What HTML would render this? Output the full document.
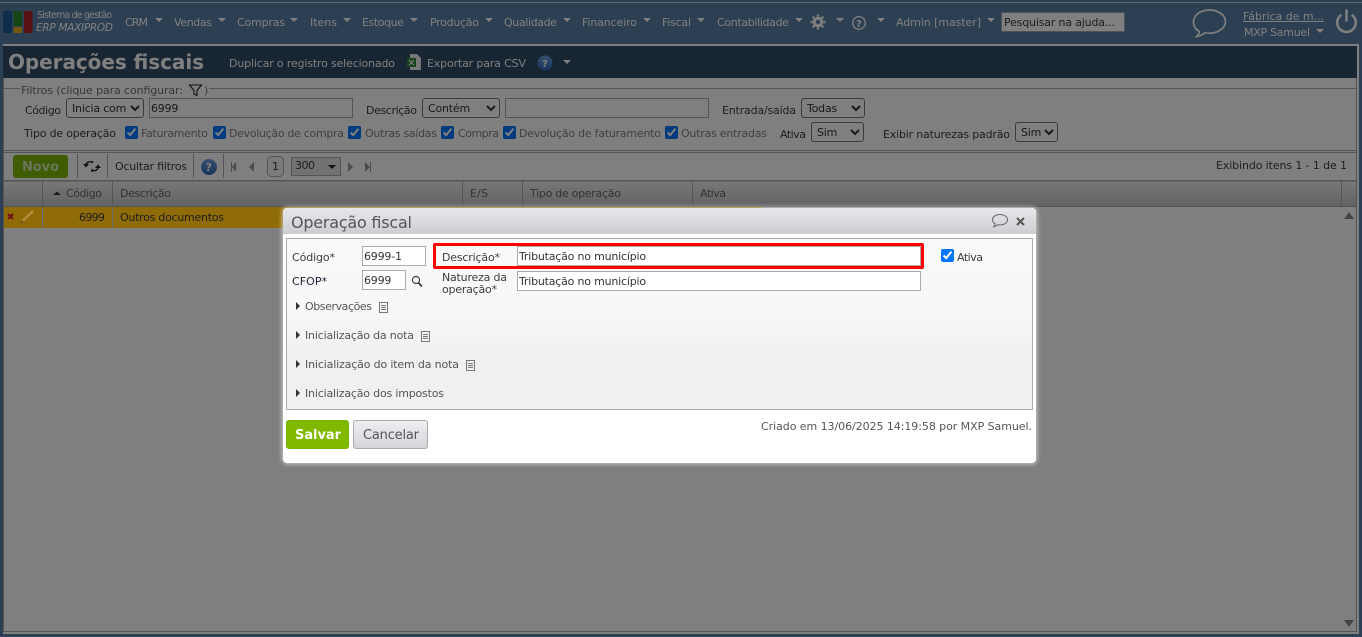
<!DOCTYPE html>
<html lang="pt-BR"><head><meta charset="utf-8"><title>Operações fiscais</title>
<style>
html,body{margin:0;padding:0;width:1362px;height:637px;overflow:hidden;background:#fff}
body{position:relative;font-family:"DejaVu Sans",sans-serif;font-size:11px;color:#333}
.layer{position:absolute;left:0;top:0;width:1362px;height:637px}
svg.layer text{font-family:"DejaVu Sans",sans-serif;font-size:11px;fill:#444}
svg.layer text.nav{fill:#fff}
svg.layer text.dk{fill:#3c3c3c}
#overlay{background:rgba(0,0,0,.5)}
input[type=text],select{position:absolute;box-sizing:border-box;margin:0;font-family:"DejaVu Sans",sans-serif;font-size:11px;letter-spacing:-.2px;color:#333;background:#fff;outline:none}
input[type=text]{border:1px solid #aaa;padding:0 1px;border-radius:0}
select{border:1px solid #767676;border-radius:3px;padding:0 0 0 1px}
input[type=checkbox]{position:absolute;margin:0;width:13px;height:13px;accent-color:#0075ff}
#modal{position:absolute;left:283px;top:208px;width:753px;height:255px;background:#fff;border-radius:4px;box-shadow:0 0 5px 1px rgba(255,255,255,.6)}
#mtitle{position:absolute;left:0;top:0;width:753px;height:26px;border-radius:4px 4px 0 0;background:linear-gradient(#e7e8ea,#cccdd1)}
#mpanel{position:absolute;left:3px;top:30px;width:747px;height:172px;box-sizing:border-box;border:1px solid #a9abad;background:linear-gradient(#f8f9f9 0,#f7f8f8 40%,#eff0f2 70%,#eff0f2 100%)}
.btn{position:absolute;top:212px;height:29px;box-sizing:border-box;border-radius:3px}
#salvar{left:3px;width:63px;background:#7fba00;border:1px solid #79b000}
#cancelar{left:70px;width:75px;background:linear-gradient(#eceef0,#d3d5d9);border:1px solid #a9abb0}
#red{position:absolute;left:433px;top:243px;width:491px;height:26px;box-sizing:border-box;border:3px solid #f00;border-radius:2px}
</style></head><body>

<!-- PAGE BEHIND THE MODAL -->
<svg class="layer" viewBox="0 0 1362 637">
<defs>
<linearGradient id="gh" x1="0" y1="0" x2="0" y2="1"><stop offset="0" stop-color="#f0f0f0"/><stop offset="1" stop-color="#c4c6c8"/></linearGradient>
<linearGradient id="hb" x1="0" y1="0" x2="0" y2="1"><stop offset="0" stop-color="#6da0e0"/><stop offset="1" stop-color="#2f66b8"/></linearGradient>
</defs>
<rect width="1362" height="637" fill="#5a7ea4"/>
<rect y="2" width="1362" height="1" fill="#c0d0d8"/>
<rect x="3" y="44" width="1356" height="590" fill="#fff"/>
<rect x="3" y="46" width="1354" height="32" fill="#304a66"/>
<!-- logo -->
<rect x="3" y="11" width="9" height="22" rx="1.5" fill="#1e5a9a"/>
<rect x="13.500" y="11" width="8.500" height="15" rx="1" fill="#2f8a30"/>
<rect x="13.500" y="27" width="8.500" height="6" rx="1" fill="#e8b020"/>
<rect x="24" y="11" width="8.500" height="22" rx="1.500" fill="#b02020"/>
<text class="nav" x="37" y="18" textLength="75" style="font-size:9.500px">Sistema de gestão</text>
<text class="nav" x="36" y="31" textLength="77" style="font-size:10.500px;font-style:italic">ERP MAXIPROD</text>
<!-- nav -->
<text class="nav" x="125" y="26" textLength="23">CRM</text>
<text class="nav" x="174" y="26" textLength="38">Vendas</text>
<text class="nav" x="237" y="26" textLength="48">Compras</text>
<text class="nav" x="310" y="26" textLength="27">Itens</text>
<text class="nav" x="362" y="26" textLength="42">Estoque</text>
<text class="nav" x="430" y="26" textLength="49">Produção</text>
<text class="nav" x="504" y="26" textLength="53">Qualidade</text>
<text class="nav" x="582" y="26" textLength="55">Financeiro</text>
<text class="nav" x="662" y="26" textLength="29">Fiscal</text>
<text class="nav" x="717" y="26" textLength="72">Contabilidade</text>
<text class="nav" x="896" y="26" textLength="85">Admin [master]</text>
<g fill="#fff">
<path d="M155 18h8l-4 4z"/><path d="M218 18h8l-4 4z"/><path d="M290 18h8l-4 4z"/><path d="M343 18h8l-4 4z"/><path d="M410 18h8l-4 4z"/><path d="M485 18h8l-4 4z"/><path d="M563 18h8l-4 4z"/><path d="M643 18h8l-4 4z"/><path d="M697 18h8l-4 4z"/><path d="M795 18h8l-4 4z"/><path d="M836 18h8l-4 4z"/><path d="M877 18h8l-4 4z"/><path d="M987 18h8l-4 4z"/><path d="M1316 29h8l-4 4z"/><path d="M563 60h8l-4 4z"/>
</g>
<!-- gear -->
<g transform="translate(818 22)" fill="none" stroke="#fff"><circle r="3.800" stroke-width="3"/><path stroke-width="2.400" d="M0-7.500v2M0 7.500v-2M-7.500 0h2M7.500 0h-2M-5.300-5.300l1.400 1.400M5.300 5.300l-1.400-1.400M-5.300 5.300l1.400-1.400M5.300-5.300l-1.400 1.400"/></g>
<!-- help header -->
<circle cx="859" cy="23" r="6.300" fill="none" stroke="#fff" stroke-width="1.300"/>
<text class="nav" x="856" y="27" style="font-size:10px;font-weight:bold">?</text>
<!-- search -->
<rect x="1001.500" y="12.500" width="123" height="19" fill="#fff" stroke="#9aa6b0"/>
<text class="dk" x="1004" y="26" textLength="111">Pesquisar na ajuda...</text>
<!-- chat bubble -->
<path d="M1209.500 10c-9 0-16 5-16 12 0 4 2 7.500 6 9.500-.3 2-1.300 3.500-2.800 5 3-.3 6-1.800 8-3.700 1.600.3 3.200.4 4.800.4 9 0 16-5.500 16-11.700S1218.500 10 1209.500 10z" fill="none" stroke="#fff" stroke-width="1.700"/>
<text class="nav" x="1243" y="20" textLength="81">Fábrica de m...</text>
<rect x="1243" y="21" width="81" height="1" fill="#fff"/>
<text class="nav" x="1244" y="36" textLength="66">MXP Samuel</text>
<!-- power -->
<path d="M1340.500 15.500a9.300 9.300 0 1 0 12 0" fill="none" stroke="#fff" stroke-width="2.500" stroke-linecap="round"/>
<path d="M1346.500 10.500v10" fill="none" stroke="#fff" stroke-width="2.500" stroke-linecap="round"/>
<!-- title bar -->
<text x="8" y="69" textLength="196" style="fill:#fff;font-size:20px;font-weight:bold">Operações fiscais</text>
<text class="nav" x="229" y="67" textLength="166">Duplicar o registro selecionado</text>
<path d="M410 54h7l4 4v12h-11z" fill="#eee"/><rect x="407" y="58" width="9" height="9" fill="#2e8a40"/><path d="M409 60l5 5M414 60l-5 5" stroke="#fff" stroke-width="1"/>
<text class="nav" x="427" y="67" textLength="99">Exportar para CSV</text>
<circle cx="545" cy="63" r="7.500" fill="url(#hb)"/><text x="542" y="67" style="fill:#fff;font-size:10px;font-weight:bold">?</text>
<!-- filter fieldset -->
<path d="M20 88.500H3.500V150.500H1356.500V88.500H209" fill="none" stroke="#aaa"/>
<text x="21" y="94" textLength="162" style="fill:#707070">Filtros (clique para configurar:</text>
<path d="M189.500 85h12l-4.500 5.500v5l-3 -1.500v-3.500z" fill="none" stroke="#222" stroke-width="1.100"/>
<text x="204" y="94" style="fill:#707070">)</text>
<text class="dk" x="25" y="114" textLength="36">Código</text>
<text class="dk" x="366" y="114" textLength="51">Descrição</text>
<text class="dk" x="722" y="114" textLength="74">Entrada/saída</text>
<text class="dk" x="24" y="137" textLength="92">Tipo de operação</text>
<text x="141" y="137" textLength="67" style="fill:#808080">Faturamento</text>
<text x="229" y="137" textLength="115" style="fill:#808080">Devolução de compra</text>
<text x="365" y="137" textLength="72" style="fill:#808080">Outras saídas</text>
<text x="458" y="137" textLength="41" style="fill:#808080">Compra</text>
<text x="519" y="137" textLength="142" style="fill:#808080">Devolução de faturamento</text>
<text x="681" y="137" textLength="86" style="fill:#808080">Outras entradas</text>
<text class="dk" x="780" y="138" textLength="26">Ativa</text>
<text class="dk" x="883" y="138" textLength="127">Exibir naturezas padrão</text>
<!-- toolbar -->
<rect x="3.500" y="152.500" width="1353" height="28" fill="none" stroke="#aaa"/>
<rect x="13" y="155" width="55" height="23" rx="3" fill="#7fba00"/>
<text x="22" y="171" textLength="37" style="fill:#d8e8b8;font-size:13px;font-weight:bold">Novo</text>
<path d="M77.500 154v24M107.500 154v24M193.500 154v24M223.500 154v24" stroke="#aaa"/>
<g fill="none" stroke="#222" stroke-width="1.400"><path d="M92 162.500c-2.500-1.500-5.500-.5-6 2.500"/><path d="M92 170c2.500 1.500 5.500.5 6-2.500"/><path d="M92.500 161v2M92 169v3"/></g>
<path d="M83 164h6l-3 3.500zM95 168h6l-3-3.500z" fill="#222"/>
<text class="dk" x="115" y="170" textLength="72">Ocultar filtros</text>
<circle cx="209" cy="167" r="8" fill="url(#hb)"/><text x="205.500" y="171" style="fill:#fff;font-size:11px;font-weight:bold">?</text>
<g fill="#999"><path d="M231 162h1v10h-1zM236 162v10l-4-5z"/><path d="M254 162v10l-5-5z"/><path d="M348 162v10l5-5z"/><path d="M365 162v10l5-5zM370 162h1v10h-1z"/></g>
<rect x="267.500" y="156.500" width="16" height="20" rx="4" fill="#f4f4f4" stroke="#aaa"/>
<text class="dk" x="272" y="170">1</text>
<rect x="291.500" y="157.500" width="49" height="18" fill="#e4e4e4" stroke="#aaa"/>
<text class="dk" x="295" y="169" textLength="20">300</text>
<path d="M328 165h8l-4 4z" fill="#222"/>
<text x="1216" y="169" textLength="131" class="dk">Exibindo itens 1 - 1 de 1</text>
<!-- grid header -->
<rect x="4" y="181" width="1352" height="25" fill="url(#gh)"/>
<rect x="3" y="180.500" width="1353" height="1" fill="#aaa"/>
<rect x="3" y="206" width="1353" height="1" fill="#aaa"/>
<path d="M42.500 181v25M112.500 181v25M462.500 181v25M522.500 181v25M692.500 181v25M1341.500 181v25" stroke="#aaa"/>
<path d="M53 195l4-3.500 4 3.500z" fill="#333"/>
<text x="66" y="197" textLength="36" style="fill:#666">Código</text>
<text x="120" y="197" textLength="51" style="fill:#666">Descrição</text>
<text x="470" y="197" textLength="18" style="fill:#666">E/S</text>
<text x="530" y="197" textLength="91" style="fill:#666">Tipo de operação</text>
<text x="700" y="197" textLength="26" style="fill:#666">Ativa</text>
<!-- scroll arrows + frame -->
<path d="M1344 219h10l-5-7z" fill="#888"/><path d="M1344 620h10l-5 7z" fill="#888"/>
<rect x="3.500" y="631" width="1353" height="1" fill="#aaa"/>
<rect x="1356" y="78" width="1" height="554" fill="#aaa"/>
<rect x="3" y="78" width="1" height="554" fill="#aaa"/>
</svg>

<input type="text" value="6999" style="left:149px;top:98px;width:204px;height:20px">
<input type="text" value="" style="left:505px;top:98px;width:204px;height:20px">
<select style="left:66px;top:98px;width:78px;height:20px"><option>Inicia com</option></select>
<select style="left:422px;top:98px;width:78px;height:20px"><option>Contém</option></select>
<select style="left:801px;top:98px;width:64px;height:20px"><option>Todas</option></select>
<select style="left:811px;top:122px;width:53px;height:20px"><option>Sim</option></select>
<select style="left:1015px;top:122px;width:43px;height:20px"><option>Sim</option></select>
<input type="checkbox" checked style="left:125px;top:126px">
<input type="checkbox" checked style="left:213px;top:126px">
<input type="checkbox" checked style="left:348px;top:126px">
<input type="checkbox" checked style="left:441px;top:126px">
<input type="checkbox" checked style="left:503px;top:126px">
<input type="checkbox" checked style="left:665px;top:126px">

<div id="overlay" class="layer"></div>

<!-- selected row, kept saturated over the dim layer -->
<svg class="layer" viewBox="0 0 1362 637">
<rect x="4" y="207" width="758" height="21" fill="#8f6c08"/>
<path d="M42.500 207v21M112.500 207v21" stroke="#6b6b6b"/>
<path d="M8 214l5 5M13 214l-5 5" stroke="#6e1010" stroke-width="2"/>
<path d="M22 221.500l11-10.500" stroke="#b88a3a" stroke-width="2.400"/>
<path d="M21 223l2-2" stroke="#5a4a2a" stroke-width="1.500"/>
<text x="79" y="221" textLength="26" style="fill:#1e1e1e">6999</text>
<text x="120" y="221" textLength="104" style="fill:#1e1e1e">Outros documentos</text>
</svg>

<!-- MODAL -->
<div id="modal"><div id="mtitle"></div><div id="mpanel"></div><div class="btn" id="salvar"></div><div class="btn" id="cancelar"></div></div>
<input type="text" value="6999-1" style="left:362px;top:246px;width:64px;height:20px">
<input type="text" value="6999" style="left:362px;top:270px;width:44px;height:20px">
<input type="text" value="Tributação no município" style="left:517px;top:246px;width:404px;height:20px">
<input type="text" value="Tributação no município" style="left:517px;top:271px;width:404px;height:20px">
<input type="checkbox" checked style="left:941px;top:249px">
<div id="red"></div>
<svg class="layer" viewBox="0 0 1362 637" style="pointer-events:none">
<text x="291" y="228" textLength="121" style="fill:#555;font-size:16px">Operação fiscal</text>
<path d="M1000 214.500c-4.500 0-7.500 2.400-7.500 5.300 0 1.800 1 3.200 2.800 4.100-.2 1-.7 2-1.500 2.800 1.700-.2 3.100-1 4.100-2 .7.100 1.400.200 2.100.200 4.500 0 7.500-2.300 7.500-5.100s-3-5.300-7.500-5.300z" fill="none" stroke="#666" stroke-width="1"/>
<path d="M1017 218l7 7M1024 218l-7 7" stroke="#555" stroke-width="2"/>
<text class="dk" x="292" y="261" textLength="43">Código*</text>
<text x="292" y="285" textLength="35" style="fill:#223">CFOP*</text>
<circle cx="416" cy="280" r="3.600" fill="none" stroke="#333" stroke-width="1.100"/><path d="M418.500 283l3.500 3.500" stroke="#333" stroke-width="1.600"/>
<text class="dk" x="442" y="261" textLength="58">Descrição*</text>
<text class="dk" x="442" y="281" textLength="65">Natureza da</text>
<text class="dk" x="442" y="293" textLength="55">operação*</text>
<text class="dk" x="957" y="261" textLength="26">Ativa</text>
<g fill="#333"><path d="M296 302v8l4-4z"/><path d="M296 331v8l4-4z"/><path d="M296 360v8l4-4z"/><path d="M296 389v8l4-4z"/></g>
<text x="305" y="310" textLength="67" style="fill:#555">Observações</text>
<text x="305" y="339" textLength="109" style="fill:#555">Inicialização da nota</text>
<text x="305" y="368" textLength="154" style="fill:#555">Inicialização do item da nota</text>
<text x="305" y="397" textLength="139" style="fill:#555">Inicialização dos impostos</text>
<g fill="none" stroke="#777"><path d="M379.500 302.500h8v10h-8zM381 305.500h5M381 307.500h5M381 309.500h5"/><path d="M421.500 331.500h8v10h-8zM423 334.500h5M423 336.500h5M423 338.500h5"/><path d="M466.500 360.500h8v10h-8zM468 363.500h5M468 365.500h5M468 367.500h5"/></g>
<text x="761" y="430" textLength="271" style="fill:#555">Criado em 13/06/2025 14:19:58 por MXP Samuel.</text>
<text x="295" y="439" textLength="46" style="fill:#fff;font-size:13px;font-weight:bold">Salvar</text>
<text x="363" y="439" textLength="56" style="fill:#555;font-size:13px">Cancelar</text>
</svg>
</body></html>
